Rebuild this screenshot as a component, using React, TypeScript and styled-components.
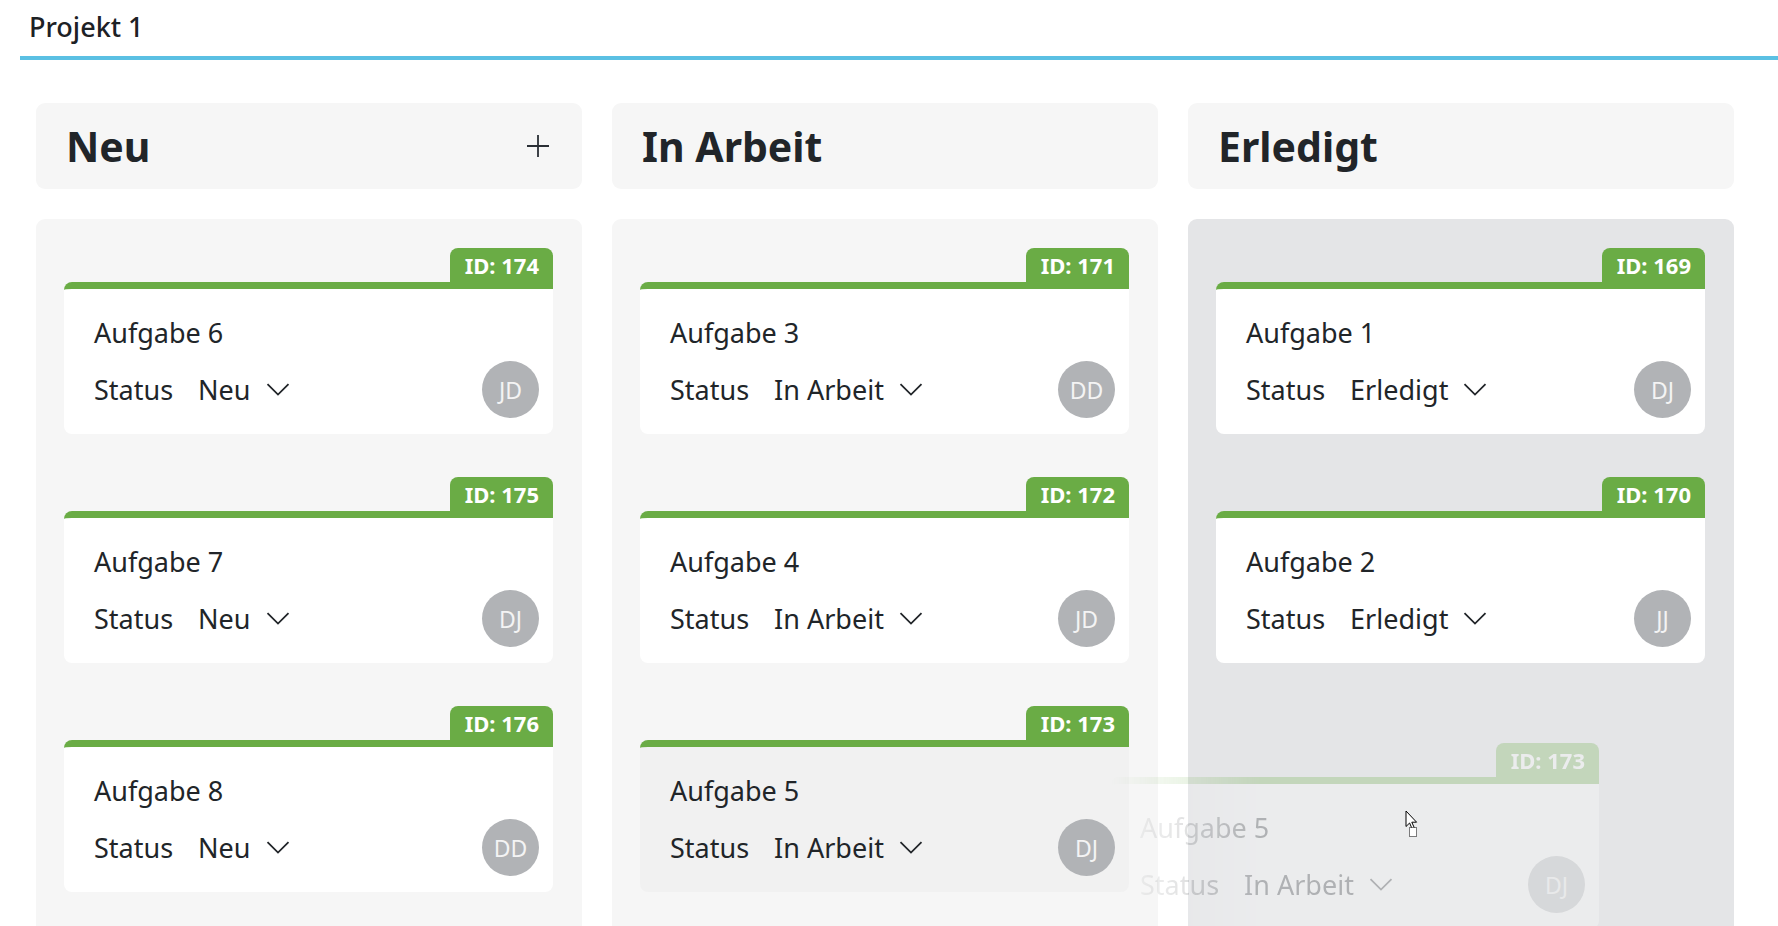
import React from "react";
import styled, { createGlobalStyle } from "styled-components";

interface Task {
  id: number;
  title: string;
  status: string;
  owner: string;
  dragging?: boolean;
}

interface Lane {
  name: string;
  canAdd?: boolean;
  dropTarget?: boolean;
  tasks: Task[];
}

const lanes: Lane[] = [
  {
    name: "Neu",
    canAdd: true,
    tasks: [
      { id: 174, title: "Aufgabe 6", status: "Neu", owner: "JD" },
      { id: 175, title: "Aufgabe 7", status: "Neu", owner: "DJ" },
      { id: 176, title: "Aufgabe 8", status: "Neu", owner: "DD" },
    ],
  },
  {
    name: "In Arbeit",
    tasks: [
      { id: 171, title: "Aufgabe 3", status: "In Arbeit", owner: "DD" },
      { id: 172, title: "Aufgabe 4", status: "In Arbeit", owner: "JD" },
      { id: 173, title: "Aufgabe 5", status: "In Arbeit", owner: "DJ", dragging: true },
    ],
  },
  {
    name: "Erledigt",
    dropTarget: true,
    tasks: [
      { id: 169, title: "Aufgabe 1", status: "Erledigt", owner: "DJ" },
      { id: 170, title: "Aufgabe 2", status: "Erledigt", owner: "JJ" },
    ],
  },
];

// the card that is being dragged, drawn under the pointer
const ghost = { task: lanes[1].tasks[2], x: 1110, y: 743 };

const GlobalStyle = createGlobalStyle`
  * { box-sizing: border-box; }
  html, body {
    margin: 0;
    padding: 0;
    height: 100%;
    overflow: hidden;
    background: #ffffff;
  }
  body {
    font-family: "Noto Sans", "Open Sans", sans-serif;
    color: #212529;
  }
`;

const Chevron = () => (
  <svg width="24" height="13" viewBox="0 0 24 13" fill="none">
    <path d="M1.5 1.2 L12 11.6 L22.5 1.2" stroke="#212529" strokeWidth="1.8" />
  </svg>
);

const PlusIcon = () => (
  <svg width="24" height="24" viewBox="0 0 24 24" fill="none">
    <path d="M12 1 V23 M1 12 H23" stroke="#2a2f35" strokeWidth="1.8" />
  </svg>
);

const DragCursor = () => (
  <svg width="18" height="28" viewBox="0 0 18 28">
    <path
      d="M1 1 L1 16.5 L4.6 13 L7.2 19 L9.4 18 L6.8 12.2 L11.6 12.2 Z"
      fill="#ffffff"
      stroke="#000000"
      strokeWidth="1"
      strokeLinejoin="round"
    />
    <rect x="4.5" y="17.5" width="7" height="9" fill="#ffffff" stroke="#000000" strokeDasharray="1 1" />
  </svg>
);

const TaskCard = ({ task }: { task: Task }) => (
  <Card>
    <BadgeRow>
      <Badge>ID: {task.id}</Badge>
    </BadgeRow>
    <CardBody $dragging={task.dragging}>
      <Title>{task.title}</Title>
      <MetaRow>
        <StatusLabel>Status</StatusLabel>
        <StatusSelect>
          {task.status}
          <Chevron />
        </StatusSelect>
        <Avatar>{task.owner}</Avatar>
      </MetaRow>
    </CardBody>
  </Card>
);

export default function App() {
  return (
    <Page>
      <GlobalStyle />
      <TabBar>
        <Tab>Projekt 1</Tab>
      </TabBar>

      <Board>
        {lanes.map((lane) => (
          <LaneColumn key={lane.name}>
            <LaneHeader>
              <LaneTitle>{lane.name}</LaneTitle>
              {lane.canAdd && (
                <AddButton aria-label="Aufgabe hinzufügen">
                  <PlusIcon />
                </AddButton>
              )}
            </LaneHeader>
            <LaneBody $dropTarget={lane.dropTarget}>
              {lane.tasks.map((task) => (
                <TaskCard key={task.id} task={task} />
              ))}
            </LaneBody>
          </LaneColumn>
        ))}
      </Board>

      <DragGhost style={{ left: ghost.x, top: ghost.y }}>
        <TaskCard task={{ ...ghost.task, dragging: false }} />
      </DragGhost>
      <Pointer style={{ left: ghost.x + 295, top: ghost.y + 67 }}>
        <DragCursor />
      </Pointer>
    </Page>
  );
}

const Page = styled.div`
  position: relative;
  height: 100vh;
  display: flex;
  flex-direction: column;
`;

const TabBar = styled.div`
  display: flex;
  margin-left: 20px;
  border-bottom: 4px solid #5bc0e3;
`;

const Tab = styled.div`
  padding: 8px 9px 10px;
  font-size: 27px;
  line-height: 38px;
  font-weight: 500;
  color: #1d2125;
`;

const Board = styled.div`
  flex: 1;
  min-height: 0;
  display: grid;
  grid-template-columns: repeat(3, 546px);
  column-gap: 30px;
  padding: 43px 0 0 36px;
`;

const LaneColumn = styled.section`
  display: flex;
  flex-direction: column;
  gap: 30px;
  min-height: 0;
`;

const LaneHeader = styled.header`
  height: 86px;
  flex-shrink: 0;
  display: flex;
  align-items: center;
  justify-content: space-between;
  padding: 0 32px 0 30px;
  background: #f6f6f6;
  border-radius: 9px;
`;

const LaneTitle = styled.h2`
  margin: 0;
  font-size: 41px;
  line-height: 50px;
  font-weight: 700;
  color: #212529;
`;

const AddButton = styled.button`
  display: flex;
  padding: 0;
  border: none;
  background: none;
  cursor: pointer;
`;

const LaneBody = styled.div<{ $dropTarget?: boolean }>`
  flex: 1;
  display: flex;
  flex-direction: column;
  gap: 43px;
  padding: 29px 29px 0 28px;
  background: ${(p) => (p.$dropTarget ? "#e4e5e7" : "#f6f6f6")};
  border-radius: 9px 9px 0 0;
`;

const Card = styled.article`
  display: flex;
  flex-direction: column;
`;

const BadgeRow = styled.div`
  display: flex;
  justify-content: flex-end;
`;

const Badge = styled.span`
  height: 34px;
  display: flex;
  align-items: center;
  padding: 0 14px 0 15px;
  background: #6aac45;
  color: #ffffff;
  font-size: 22px;
  font-weight: 700;
  border-radius: 8px 8px 0 0;
`;

const CardBody = styled.div<{ $dragging?: boolean }>`
  padding: 24px 14px 16px 30px;
  background: ${(p) => (p.$dragging ? "#f1f1f1" : "#ffffff")};
  border-top: 7px solid #6aac45;
  border-radius: 8px 0 8px 8px;
`;

const Title = styled.div`
  font-size: 27px;
  line-height: 40px;
  color: #212529;
`;

const MetaRow = styled.div`
  display: flex;
  align-items: center;
  margin-top: 8px;
  font-size: 27px;
  color: #212529;
`;

const StatusLabel = styled.span`
  margin-right: 25px;
`;

const StatusSelect = styled.span`
  display: inline-flex;
  align-items: center;
  gap: 15px;
  cursor: pointer;
`;

const Avatar = styled.span`
  margin-left: auto;
  width: 57px;
  height: 57px;
  display: flex;
  align-items: center;
  justify-content: center;
  border-radius: 50%;
  background: #b1b3b6;
  color: #f4f4f4;
  font-size: 23px;
`;

const DragGhost = styled.div`
  position: absolute;
  width: 489px;
  opacity: 0.27;
  pointer-events: none;
  -webkit-mask-image: linear-gradient(to right, transparent 0, #000 150px);
  mask-image: linear-gradient(to right, transparent 0, #000 150px);
`;

const Pointer = styled.div`
  position: absolute;
  pointer-events: none;
`;
